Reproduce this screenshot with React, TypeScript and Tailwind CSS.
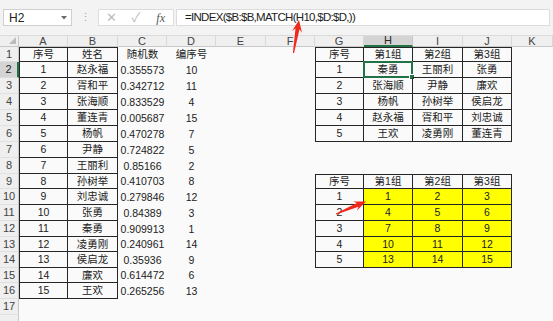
import React from 'react';

const COLS = ['A', 'B', 'C', 'D', 'E', 'F', 'G', 'H', 'I', 'J', 'K'];
const ROW_COUNT = 18;

const people: [string, string, string][] = [
  ['赵永福', '0.355573', '10'],
  ['胥和平', '0.342712', '11'],
  ['张海顺', '0.833529', '4'],
  ['董连青', '0.005687', '15'],
  ['杨帆', '0.470278', '7'],
  ['尹静', '0.724822', '5'],
  ['王丽利', '0.85166', '2'],
  ['孙树举', '0.410703', '8'],
  ['刘忠诚', '0.279846', '12'],
  ['张勇', '0.84389', '3'],
  ['秦勇', '0.909913', '1'],
  ['凌勇刚', '0.240961', '14'],
  ['侯启龙', '0.35936', '9'],
  ['廉欢', '0.614472', '6'],
  ['王欢', '0.265256', '13'],
];

const groups: string[][] = [
  ['秦勇', '王丽利', '张勇'],
  ['张海顺', '尹静', '廉欢'],
  ['杨帆', '孙树举', '侯启龙'],
  ['赵永福', '胥和平', '刘忠诚'],
  ['王欢', '凌勇刚', '董连青'],
];

// cell values keyed like "A1"
const values: Record<string, string> = {
  A1: '序号',
  B1: '姓名',
  C1: '随机数',
  D1: '编序号',
  G1: '序号',
  H1: '第1组',
  I1: '第2组',
  J1: '第3组',
  G9: '序号',
  H9: '第1组',
  I9: '第2组',
  J9: '第3组',
};
people.forEach(([name, rnd, idx], i) => {
  const r = i + 2;
  values[`A${r}`] = String(i + 1);
  values[`B${r}`] = name;
  values[`C${r}`] = rnd;
  values[`D${r}`] = idx;
});
groups.forEach((row, i) => {
  values[`G${i + 2}`] = String(i + 1);
  values[`H${i + 2}`] = row[0];
  values[`I${i + 2}`] = row[1];
  values[`J${i + 2}`] = row[2];
  values[`G${i + 10}`] = String(i + 1);
  values[`H${i + 10}`] = String(i * 3 + 1);
  values[`I${i + 10}`] = String(i * 3 + 2);
  values[`J${i + 10}`] = String(i * 3 + 3);
});

type Range = { c1: number; c2: number; r1: number; r2: number };
const tables: Range[] = [
  { c1: 0, c2: 1, r1: 1, r2: 16 },
  { c1: 6, c2: 9, r1: 1, r2: 6 },
  { c1: 6, c2: 9, r1: 9, r2: 14 },
];

function inRange(t: Range, c: number, r: number) {
  return c >= t.c1 && c <= t.c2 && r >= t.r1 && r <= t.r2;
}

function arrowPoints(x1: number, y1: number, x2: number, y2: number) {
  const headLen = 12;
  const headW = 10;
  const neckW = 4;
  const tailW = 1.2;
  const dx = x2 - x1;
  const dy = y2 - y1;
  const len = Math.hypot(dx, dy);
  const ux = dx / len;
  const uy = dy / len;
  const nx = -uy;
  const ny = ux;
  const bx = x2 - ux * headLen;
  const by = y2 - uy * headLen;
  const kx = bx + ux * 3;
  const ky = by + uy * 3;
  const pts = [
    [x1 + nx * tailW / 2, y1 + ny * tailW / 2],
    [kx + nx * neckW / 2, ky + ny * neckW / 2],
    [bx + nx * headW / 2, by + ny * headW / 2],
    [x2, y2],
    [bx - nx * headW / 2, by - ny * headW / 2],
    [kx - nx * neckW / 2, ky - ny * neckW / 2],
    [x1 - nx * tailW / 2, y1 - ny * tailW / 2],
  ];
  return pts.map(([x, y]) => `${x.toFixed(1)},${y.toFixed(1)}`).join(' ');
}

function Cell({ c, r }: { c: number; r: number }) {
  const key = `${COLS[c]}${r}`;
  const table = tables.find((t) => inRange(t, c, r));
  const yellow = c >= 7 && c <= 9 && r >= 10 && r <= 14;
  const selected = key === 'H2';

  const cls = ['relative flex items-center justify-center whitespace-nowrap overflow-visible'];
  if (table) {
    cls.push('border-r border-b border-[#262626]');
    if (c === table.c1) cls.push('border-l');
    if (r === table.r1) cls.push('border-t');
  }
  if (yellow) cls.push('bg-[#ffff00]');

  return (
    <div className={cls.join(' ')}>
      <span className="leading-none">{values[key] ?? ''}</span>
      {selected && (
        <>
          <div className="absolute -inset-[1px] border-2 border-[#217346]" />
          <div className="absolute -right-[3px] -bottom-[3px] w-[6px] h-[6px] bg-[#217346] border border-white" />
        </>
      )}
    </div>
  );
}

export default function App() {
  const rows = Array.from({ length: ROW_COUNT }, (_, i) => i + 1);

  return (
    <div className="relative w-[553px] h-[321px] overflow-hidden bg-[#fafafa] text-[#222] font-['Liberation_Sans','Noto_Sans_CJK_SC',sans-serif]">
      {/* formula bar */}
      <div className="flex items-center h-[36px] bg-[#f3f3f3] border-b border-[#dadada] px-[3px] gap-[2px]">
        <div className="flex items-center justify-between w-[69px] h-[17px] bg-white border border-[#cfcfcf] pl-[5px] pr-[4px] text-[12px]">
          <span>H2</span>
          <svg width="6" height="4" viewBox="0 0 6 4">
            <path d="M0 0 L6 0 L3 3.5 Z" fill="#6b6b6b" />
          </svg>
        </div>
        <div className="w-[22px] flex justify-center text-[#a8a8a8] text-[11px] leading-none">⋮</div>
        <div className="flex items-center w-[76px] h-[17px] bg-white border border-[#dcdcdc] text-[13px]">
          <span className="w-[25px] text-center text-[#bdbdbd]">✕</span>
          <span className="w-[25px] text-center text-[#bdbdbd]">✓</span>
          <span className="w-[25px] text-center text-[#555] italic font-['Liberation_Serif',serif] text-[12px]">fx</span>
        </div>
        <div className="flex items-center flex-1 h-[17px] bg-white border border-[#dcdcdc] pl-[8px] text-[11.5px] tracking-[-0.7px] whitespace-nowrap">
          =INDEX($B:$B,MATCH(H10,$D:$D,))
        </div>
      </div>

      {/* sheet */}
      <div className="grid grid-cols-[19px_49px_50px_49px_49px_50px_49px_49px_49px_50px_49px_1fr] grid-rows-[11px_15px_16px_16px_16px_16px_16px_16px_16px_15px_16px_16px_16px_15px_16px_15px_16px_16px_16px] text-[10.5px]">
        {/* header row */}
        <div className="relative bg-[#efefef] border-r border-b border-[#c8c8c8]">
          <svg className="absolute right-[2px] bottom-[2px]" width="7" height="7" viewBox="0 0 7 7">
            <path d="M7 0 L7 7 L0 7 Z" fill="#bcbcbc" />
          </svg>
        </div>
        {COLS.map((col) => (
          <div
            key={col}
            className={
              col === 'H'
                ? 'flex items-center justify-center bg-[#d4d4d4] border-r border-[#c8c8c8] border-b-2 border-b-[#217346] text-[#262626] leading-none text-[11px]'
                : 'flex items-center justify-center bg-[#efefef] border-r border-[#d8d8d8] border-b border-b-[#c8c8c8] text-[#444] leading-none text-[11px]'
            }
          >
            {col}
          </div>
        ))}

        {rows.map((r) => (
          <React.Fragment key={r}>
            <div
              className={
                r === 2
                  ? 'flex items-center justify-center bg-[#d4d4d4] border-r-2 border-[#217346] border-b border-b-[#dcdcdc] text-[#262626] leading-none text-[11px]'
                  : 'flex items-center justify-center bg-[#efefef] border-r border-[#c8c8c8] border-b border-b-[#e0e0e0] text-[#444] leading-none text-[11px]'
              }
            >
              {r <= 17 ? r : ''}
            </div>
            {COLS.map((_, c) => (
              <Cell key={c} c={c} r={r} />
            ))}
          </React.Fragment>
        ))}
      </div>

      {/* annotation arrows */}
      <svg className="absolute inset-0 pointer-events-none" width="553" height="321" viewBox="0 0 553 321">
        <polygon points={arrowPoints(293.5, 53, 299, 20)} fill="#ee2a1e" />
        <polygon points={arrowPoints(336, 214, 366, 201.5)} fill="#ee2a1e" />
      </svg>
    </div>
  );
}
